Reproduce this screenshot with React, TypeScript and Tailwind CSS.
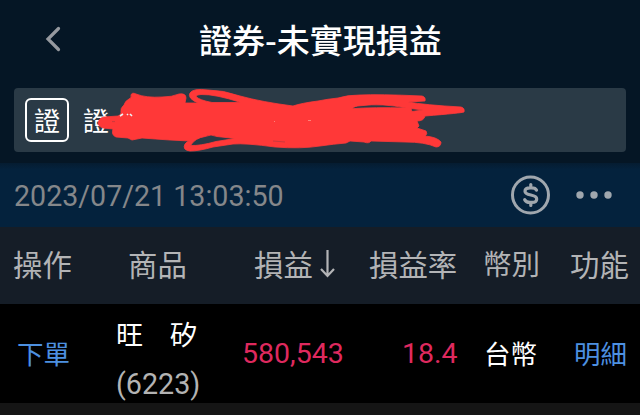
const cjk = "font-['Noto_Sans_CJK_TC','Noto_Sans_CJK_SC',sans-serif]";
const latin = "font-[Roboto,'Noto_Sans_CJK_TC',sans-serif]";

function Scribble() {
  return (
    <svg className="absolute left-0 top-0 pointer-events-none" width="640" height="160" viewBox="0 0 640 160">
      <path
        fill="#ff3838"
        stroke="#ff3838"
        strokeWidth="0.8"
        strokeLinejoin="round"
        fillRule="evenodd"
        d="M98.5 122Q99 118 104 117L118 116Q121 115 121 113Q120 108 124 105Q125 101 129 99Q132 98 131 95Q132 92 136 94Q146 98 162 97Q172 97 179 94Q186 93 186 98L185 103L198 103Q187 98 190 93Q193 88 208 90Q223 90 240 96Q262 102 293 106Q302 103 318 101Q328 99 338 98Q347 95 360 95Q378 94 422 96Q426 97 425 101L408 102Q425 105 461 107Q465 108 464 112Q462 113 425 116Q424 121 417 121L419 126L417 128L426 131Q428 134 425 136Q437 137 441 142Q441 147 436 147Q425 142 405 142L371 141Q369 144 364 142L350 141L346 143Q334 144 320 146Q301 149 275 147Q246 143 233 144L213 147Q199 151 190 151Q182 150 185 144Q187 141 190 141L170 140Q155 139 142 138L132 140L128 138L116 137Q111 135 113 129L103 128Q97 126 98.5 122ZM196 96.5Q197 94.5 201 94.5Q215 94 241 102.5L212 102.5Q199 100 196 96.5ZM190.5 145.5Q195 138 205 136.5Q211 133.5 217 136.5L235 138.5L216 141.5Q200 146 190.5 145.5ZM352 108.7Q354 106 361 105.7Q382 103 406 108Q374 107 352 108.7ZM411 108.5L423 110L412 111.5Z"
      />
      <path d="M120 116L123 114M127 115L128 114M130 114L132 116" stroke="#eef3f5" strokeWidth="1.6" fill="none" />
      <path d="M112 121.6H115M273 141L285 142" stroke="#b5393f" strokeWidth="0.7" />
      <path d="M308 120.5H311M274 121.5H275" stroke="#ff8a80" strokeWidth="0.9" />
    </svg>
  );
}

function DollarIcon() {
  return (
    <svg width="40" height="40" viewBox="0 0 40 40" fill="none" stroke="#a0a7ae" strokeLinecap="round">
      <circle cx="19.5" cy="20" r="18" strokeWidth="3" />
      <path strokeWidth="3.2" strokeLinejoin="round" d="M25.5 15.2C24.7 13.2 22.7 12.8 20.5 12.8H19C16 12.8 14 14 14 16.2C14 18.5 16 19.2 19.8 20C23.8 20.8 25.7 21.7 25.7 23.9C25.7 26.2 23.7 27.4 21 27.4H19C16.5 27.4 14.6 26.6 13.7 24.7M19.8 9.5V12.5M19.8 28V30.5" />
    </svg>
  );
}

export default function App() {
  return (
    <main className={`relative flex h-[415px] w-[640px] flex-col overflow-hidden bg-[#051625] whitespace-nowrap ${cjk}`}>
      <header className="flex h-[88px] shrink-0 items-start">
        <button className="ml-[45px] mt-[26px] h-[27px] w-4" aria-label="返回">
          <svg width="16" height="27" viewBox="0 0 16 27" fill="none" stroke="#96999f" strokeWidth="3.2" strokeLinecap="round">
            <path d="M13.5 2.5L3 13L13.5 23.5" />
          </svg>
        </button>
        <h1 className="ml-[138px] mt-[15px] text-[33px] leading-[48px] font-medium text-white">證券-未實現損益</h1>
      </header>
      <section className="mx-[14px] flex h-16 shrink-0 items-center rounded-[4px] bg-[#2a3a46] pl-[11px] text-[26px] text-white">
        <span className="flex h-11 w-11 items-center justify-center rounded-[6px] border-2 border-white leading-[38px]">證</span>
        <span className="ml-[14px] leading-[38px]">證</span>
      </section>
      <section className="mt-[11px] flex h-16 shrink-0 items-center bg-linear-to-b from-[#051c31] to-[#04223d] to-10% pl-[14px]">
        <time className={`w-[497px] pt-px text-[28.6px] leading-[34px] text-[#85878a] ${latin}`}>2023/07/21 13:03:50</time>
        <DollarIcon />
        <svg className="ml-6" width="40" height="10" viewBox="0 0 40 10" fill="#a0a7ae">
          <circle cx="5" cy="5" r="3.7" />
          <circle cx="19" cy="5" r="3.7" />
          <circle cx="33" cy="5" r="3.7" />
        </svg>
      </section>
      <section className="flex h-[77px] shrink-0 items-center bg-[#151d27] pb-[5px] pl-[13px] text-[29.4px] leading-[42px] text-[#b3b4b6]">
        <span className="w-[115px]">操作</span>
        <span className="w-[126px]">商品</span>
        <span className="flex w-[115px] items-center">
          損益
          <svg className="ml-1.5" width="16" height="30" viewBox="0 0 16 30" fill="none" stroke="#b3b4b6" strokeWidth="2.2">
            <path d="M8.5 2V28M2 21L8.5 28L15 21" />
          </svg>
        </span>
        <span className="w-[114px]">損益率</span>
        <span className="w-[87px] text-[28.5px]">幣別</span>
        <span>功能</span>
      </section>
      <section className="flex h-[99px] shrink-0 items-center bg-black pl-[17px] text-[26.5px] leading-[38px] text-white">
        <span className="w-[99px] pb-0.5 text-[#4d90e0]">下單</span>
        <span className="flex w-[126px] flex-col pt-[9px]">
          <span className="h-[50px] text-[27px] leading-[49px]">旺　矽</span>
          <span className={`h-[49px] text-[28.7px] leading-[51px] text-[#b3b3b3] ${latin}`}>(6223)</span>
        </span>
        <span className={`w-[160px] text-[28.5px] text-[#df295e] ${latin}`}>580,543</span>
        <span className={`w-[82px] text-[28.5px] text-[#df295e] ${latin}`}>18.4</span>
        <span className="w-[90px] pb-0.5">台幣</span>
        <span className="pb-0.5 text-[#4d90e0]">明細</span>
      </section>
      <div className="flex-1 bg-[#151515]" />
      <Scribble />
    </main>
  );
}
